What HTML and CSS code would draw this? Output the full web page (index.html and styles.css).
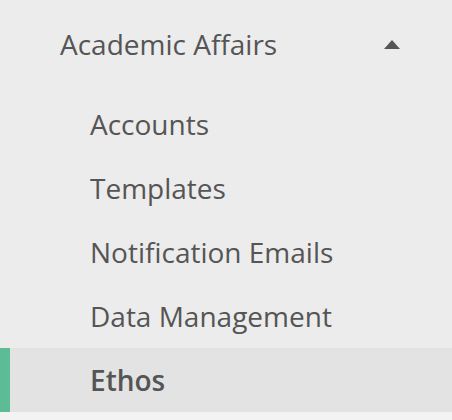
FILE: index.html
```html
<!DOCTYPE html>
<html>
<head>
<meta charset="utf-8">
<link rel="stylesheet" href="styles.css">
</head>
<body>
<nav class="sidebar">
  <div class="group-header">
    <span class="group-title">Academic Affairs</span>
    <span class="caret"></span>
  </div>
  <ul class="menu">
    <li class="item">Accounts</li>
    <li class="item">Templates</li>
    <li class="item">Notification Emails</li>
    <li class="item">Data Management</li>
    <li class="item active">Ethos</li>
  </ul>
</nav>
</body>
</html>
```

FILE: styles.css
```css
html, body {
  margin: 0;
  padding: 0;
  background: #f3f3f3;
}
.sidebar {
  background: #ececec;
  font-family: "Open Sans", "Liberation Sans", sans-serif;
  color: #555555;
  font-size: 28px;
  padding-top: 12px;
}
.group-header {
  display: flex;
  align-items: center;
  justify-content: space-between;
  height: 64px;
  padding-left: 60px;
  padding-right: 52px;
  margin-bottom: 16px;
}
.caret {
  width: 0;
  height: 0;
  border-left: 8px solid transparent;
  border-right: 8px solid transparent;
  border-bottom: 9px solid #555555;
}
.menu {
  list-style: none;
  margin: 0;
  padding: 0;
}
.item {
  height: 64px;
  display: flex;
  align-items: center;
  padding-left: 90px;
}
.item.active {
  background: #e3e3e3;
  font-weight: 600;
  box-shadow: inset 10px 0 0 #5bbc96;
}
```
